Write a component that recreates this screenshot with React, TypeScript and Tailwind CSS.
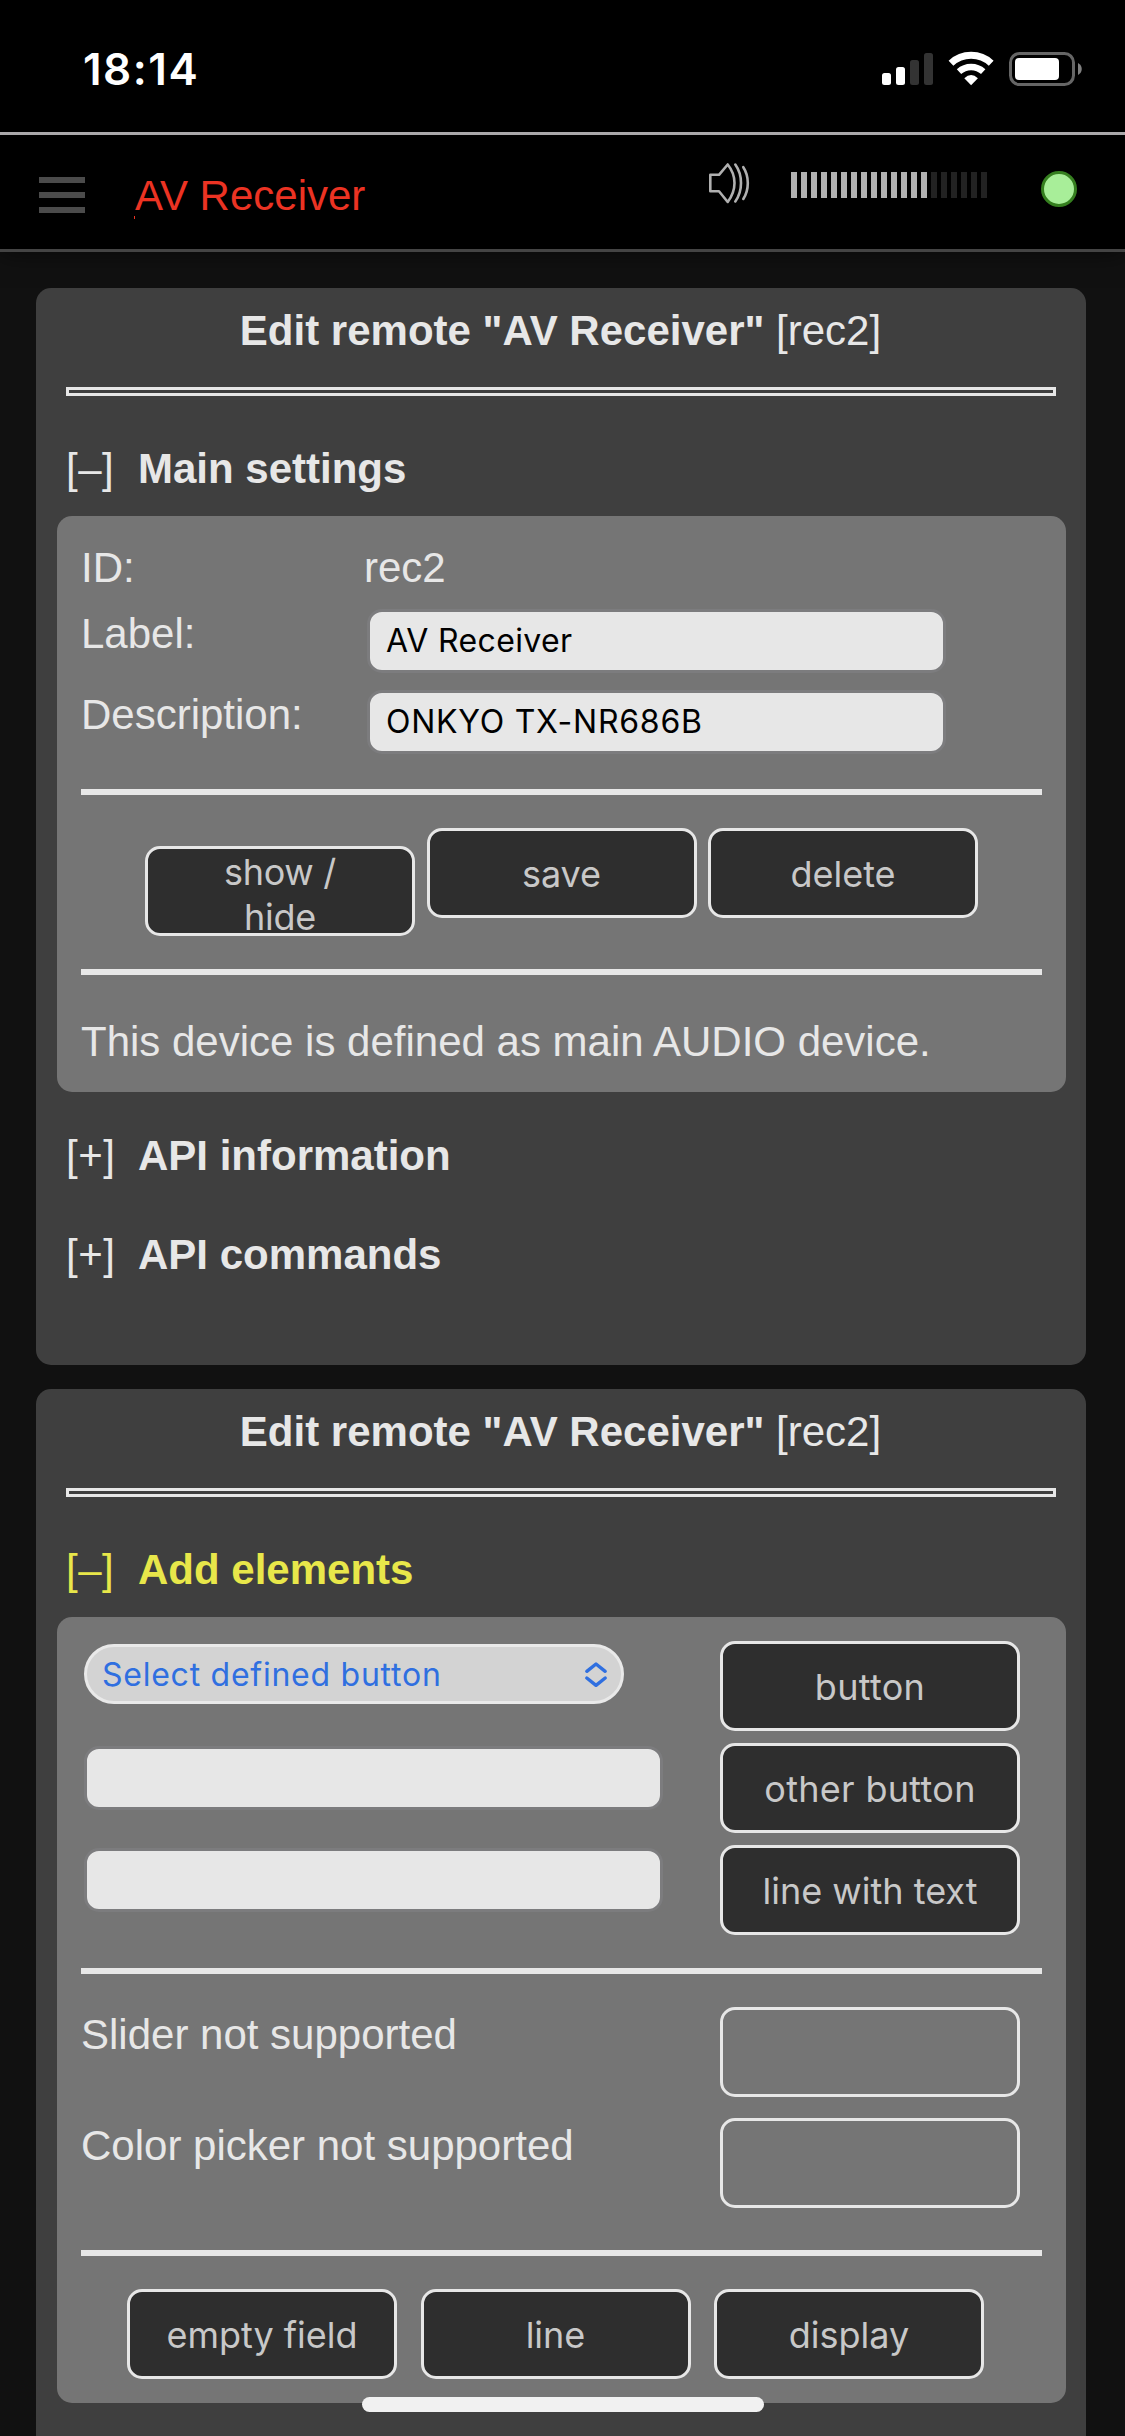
import { ReactNode } from 'react';

const VOLUME_STEPS = 20;
const VOLUME_LEVEL = 14;

function StatusBar() {
  return (
    <div className="flex h-[132px] shrink-0 items-start justify-between bg-black pl-[83px] pr-[43px] text-white">
      <div className="mt-[42px] font-['Inter',sans-serif] text-[44px] leading-[54px] font-semibold tracking-[1.5px]">18:14</div>
      <svg className="mt-[50px] h-[38px] w-[202px]" viewBox="880 50 202 38" fill="none">
        <rect x="882" y="73" width="9" height="12" rx="2.5" fill="#fff" />
        <rect x="896" y="67" width="9" height="18" rx="2.5" fill="#fff" />
        <rect x="910" y="60" width="9" height="25" rx="2.5" fill="#333" />
        <rect x="924" y="53" width="9" height="32" rx="2.5" fill="#333" />
        <path d="M951 63.2A29.5 29.5 0 0 1 991.2 63.2" stroke="#fff" strokeWidth="7" />
        <path d="M959 71.6A18 18 0 0 1 983.2 71.6" stroke="#fff" strokeWidth="6.5" />
        <path d="M964.3 78.3Q971.1 71.8 977.9 78.3L971.1 85.3Z" fill="#fff" />
        <rect x="1010.5" y="53.5" width="63" height="31" rx="9" stroke="#666" strokeWidth="3" />
        <rect x="1015" y="58" width="44" height="22" rx="4" fill="#fff" />
        <path d="M1078 63C1083 65.500 1083 72.500 1078 75Z" fill="#808080" />
      </svg>
    </div>
  );
}

function Header() {
  return (
    <header className="relative z-10 flex h-[120px] shrink-0 items-start border-y-[3px] border-t-[#aaa8aa] border-b-[#444] bg-black shadow-[0_0_24px_0_rgba(0,0,0,0.6)]">
      <div className="mt-[42px] ml-[39px] flex w-[46px] flex-col gap-[9px]">
        <div className="h-[6px] bg-[#4b4b4b]" />
        <div className="h-[6px] bg-[#4b4b4b]" />
        <div className="h-[6px] bg-[#4b4b4b]" />
      </div>
      <div className="relative mt-[37px] ml-[50px] w-[560px] text-[42px] leading-[48px] text-[#ec3323]">
        AV Receiver
        <span className="absolute top-[44px] left-[-1px] h-[3px] w-px bg-[#ec3323]" />
      </div>
      <svg className="mt-[26px] ml-[12px] h-[44px] w-[44px]" viewBox="707 161 44 44" fill="none" stroke="#b0b0b0" strokeWidth="2.600" strokeLinejoin="round" strokeLinecap="round">
        <path d="M710.300 174.800H719L727.700 164.500Q734.500 173 734.500 183Q734.500 193 727.700 202L719 191.200H710.300Z" />
        <path d="M735.300 164.500Q741 172.500 741 183Q741 193.500 735.300 201.500" />
        <path d="M743.300 167.200Q747.800 174 747.800 183Q747.800 192 743.300 199" />
      </svg>
      <div className="mt-[37px] ml-[40px] flex gap-1">
        {Array.from({ length: VOLUME_STEPS }, (_, i) => (
          <div key={i} className={i < VOLUME_LEVEL ? 'h-[26px] w-[6px] bg-[#b0b0b0]' : 'h-[26px] w-[6px] bg-[#222]'} />
        ))}
      </div>
      <div className="mt-[36px] ml-[54px] size-[36px] rounded-full border-[3px] border-[#357f1f] bg-[#a8ee99]" />
    </header>
  );
}

function PanelTitle() {
  return (
    <>
      <h1 className="pr-px text-center text-[42px] leading-[48px] whitespace-pre">
        <b>Edit remote "AV Receiver"</b> [rec2]
      </h1>
      <div className="mx-[30px] mt-[32px] h-[9px] border-[3px] border-[#e7e7e7]" />
    </>
  );
}

function SectionHeading({ mark, className, children }: { mark: string; className: string; children: ReactNode }) {
  return (
    <div className={`flex pl-[30px] text-[42px] leading-[48px] ${className}`}>
      <span className="w-[72px] tracking-[0.5px]">{mark}</span>
      <b>{children}</b>
    </div>
  );
}

function Rule({ className }: { className: string }) {
  return <div className={`h-[6px] bg-[#e7e7e7] ${className}`} />;
}

function Button({ children, wide, className = '' }: { children: ReactNode; wide?: boolean; className?: string }) {
  return (
    <button
      className={`flex h-[90px] justify-center rounded-[15px] border-[3px] border-[#e7e7e7] bg-[#2e2e2e] font-['Inter',sans-serif] text-[36px] leading-[45px] text-[#c8c8c8] ${wide ? 'w-[300px]' : 'w-[270px]'} ${className || 'pt-[21px]'}`}
    >
      {children}
    </button>
  );
}

function EmptyButton() {
  return <button className="h-[90px] w-[300px] rounded-[15px] border-[3px] border-[#e7e7e7]" />;
}

function Field({ children, className = '' }: { children?: ReactNode; className?: string }) {
  return (
    <div className={`h-[64px] w-[579px] rounded-[15px] border-[3px] border-[#7c7c7e] bg-[#e7e7e7] pl-[16px] font-['Inter',sans-serif] text-[32px] leading-[58px] text-black ${className}`}>
      {children}
    </div>
  );
}

function MainSettings() {
  return (
    <section className="h-[1077px] shrink-0 rounded-[15px] bg-[#3f3f3f] pt-[19px]">
      <PanelTitle />
      <SectionHeading mark="[–]" className="mt-[49px]">Main settings</SectionHeading>
      <div className="mt-[23px] mr-[20px] ml-[21px] h-[576px] rounded-[15px] bg-[#757575] px-[24px] pt-[28px]">
        <div className="flex">
          <span className="w-[283px]">ID:</span>
          <span>rec2</span>
        </div>
        <div className="mt-[17px] flex">
          <span className="w-[286px] pt-px">Label:</span>
          <Field className="tracking-[0.35px]">AV Receiver</Field>
        </div>
        <div className="mt-[17px] flex">
          <span className="w-[286px] pt-px">Description:</span>
          <Field className="tracking-[0.75px]">ONKYO TX-NR686B</Field>
        </div>
        <Rule className="mt-[35px]" />
        <div className="mt-[33px] ml-[64px] flex items-start gap-[11.500px]">
          <Button className="mt-[18px] pt-px tracking-[-0.3px]">
            <span>show /<br />hide</span>
          </Button>
          <Button>save</Button>
          <Button>delete</Button>
        </div>
        <Rule className="mt-[33px]" />
        <p className="mt-[43px]">This device is defined as main AUDIO device.</p>
      </div>
      <SectionHeading mark="[+]" className="mt-[40px]">API information</SectionHeading>
      <SectionHeading mark="[+]" className="mt-[51px]">API commands</SectionHeading>
    </section>
  );
}

function AddElements() {
  return (
    <section className="mt-[24px] h-[1100px] shrink-0 rounded-[15px] bg-[#3f3f3f] pt-[19px]">
      <PanelTitle />
      <SectionHeading mark="[–]" className="mt-[49px] text-[#e8e74a]">Add elements</SectionHeading>
      <div className="mt-[23px] mr-[20px] ml-[21px] h-[786px] rounded-[15px] bg-[#757575] px-[24px] pt-[24px]">
        <div className="flex">
          <div className="flex w-[639px] flex-col pt-[3px] pl-[3px]">
            <div className="flex h-[60px] w-[540px] items-center justify-between rounded-full border-[3px] border-[#e9e9e9] bg-[#d3d3d3] pr-[13px] pl-[15px] font-['Inter',sans-serif] text-[32px] leading-[54px] tracking-[0.75px] text-[#2f6fe0]">
              <span className="pt-[2px] leading-[52px]">Select defined button</span>
              <svg className="h-[30px] w-[24px]" viewBox="0 0 24 30" fill="none" stroke="#2f6fe0" strokeWidth="3.400" strokeLinecap="round" strokeLinejoin="round">
                <path d="M2.800 12.300L12 5L21.200 12.300M2.800 19L12 26.300L21.200 19" />
              </svg>
            </div>
            <Field className="mt-[42px]" />
            <Field className="mt-[38px]" />
          </div>
          <div className="flex flex-col gap-3">
            <Button wide className="pt-[21px] tracking-[0.3px]">button</Button>
            <Button wide className="pt-[21px] tracking-[0.3px]">other button</Button>
            <Button wide>line with text</Button>
          </div>
        </div>
        <Rule className="mt-[33px]" />
        <div className="mt-[33px] flex">
          <span className="w-[639px] pt-1">Slider not supported</span>
          <EmptyButton />
        </div>
        <div className="mt-[21px] flex">
          <span className="w-[639px] pt-1">Color picker not supported</span>
          <EmptyButton />
        </div>
        <Rule className="mt-[42px]" />
        <div className="mt-[33px] ml-[46px] flex gap-[23.500px]">
          <Button>empty field</Button>
          <Button>line</Button>
          <Button>display</Button>
        </div>
      </div>
    </section>
  );
}

export default function App() {
  return (
    <div className="relative flex h-[2436px] w-[1125px] flex-col overflow-hidden bg-[#111] font-['Liberation_Sans',Arial,sans-serif] text-[42px] leading-[48px] text-[#e7e7e7]">
      <StatusBar />
      <Header />
      <main className="flex flex-col pt-[36px] pr-[39px] pl-[36px]">
        <MainSettings />
        <AddElements />
      </main>
      <div className="absolute top-[2397px] left-[362px] h-[15px] w-[402px] rounded-full bg-[#f1f1f1]" />
    </div>
  );
}
